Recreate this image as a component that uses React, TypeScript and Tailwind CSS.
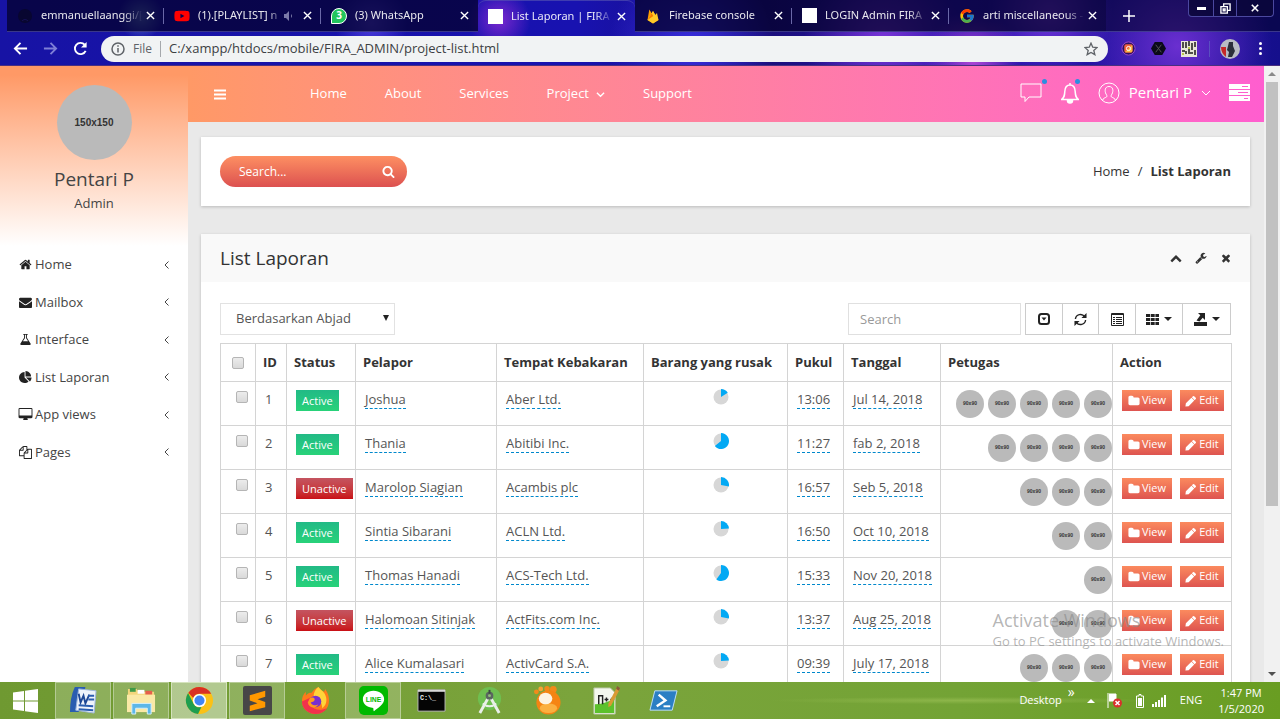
import React, { useState } from "react";
import { FaYoutube } from "react-icons/fa";
import { FcGoogle } from "react-icons/fc";

const PATHS = {
  home: "M1472 992v480q0 26-19 45t-45 19h-384v-384h-256v384h-384q-26 0-45-19t-19-45v-480q0-1 .5-3t.5-3l575-474 575 474q1 2 1 6zm223-69l-62 74q-8 9-21 11h-3q-13 0-21-7l-692-577-692 577q-12 8-24 7-13-2-21-11l-62-74q-8-10-7-23.5t11-21.5l719-599q32-26 76-26t76 26l244 204v-195q0-14 9-23t23-9h192q14 0 23 9t9 23v408l219 182q10 8 11 21.5t-7 23.5z",
  envelope: "M1792 710v794q0 66-47 113t-113 47h-1472q-66 0-113-47t-47-113v-794q44 49 101 87 362 246 497 345 57 42 92.5 65.5t94.5 48 110 24.5h2q51 0 110-24.5t94.5-48 92.5-65.5q170-123 498-345 57-39 100-87zm0-294q0 79-49 151t-122 123q-376 261-468 325-10 7-42.5 31t-54 38.5-52 32.5-57.5 27-50 9h-2q-23 0-50-9t-57.5-27-52-32.5-54-38.5-42.5-31q-91-64-262-182.5t-205-142.5q-62-42-117-115.5t-55-136.5q0-78 41.5-130t118.5-52h1472q65 0 112.5 47t47.5 113z",
  flask: "M1591 1448q56 89 21.5 152.5t-140.5 63.5h-1152q-106 0-140.5-63.5t21.5-152.5l503-793v-399h-64q-26 0-45-19t-19-45 19-45 45-19h512q26 0 45 19t19 45-19 45-45 19h-64v399zm-779-725l-272 429h712l-272-429-20-31v-436h-128v436z",
  pie: "M768 890l546 546q-106 108-247.5 168t-298.5 60q-209 0-385.5-103t-279.5-279.5-103-385.5 103-385.5 279.5-279.5 385.5-103v762zm187 6h773q0 157-60 298.5t-168 247.5zm709-128h-768v-768q209 0 385.5 103t279.5 279.5 103 385.5z",
  desktop: "M1728 992v-832q0-13-9.5-22.5t-22.5-9.5h-1600q-13 0-22.5 9.5t-9.5 22.5v832q0 13 9.5 22.5t22.5 9.5h1600q13 0 22.5-9.5t9.5-22.5zm128-832v1088q0 66-47 113t-113 47h-544q0 37 16 77.5t32 71 16 43.5q0 26-19 45t-45 19h-512q-26 0-45-19t-19-45q0-14 16-44t32-70 16-78h-544q-66 0-113-47t-47-113v-1088q0-66 47-113t113-47h1600q66 0 113 47t47 113z",
  files: "M1696 384q40 0 68 28t28 68v1216q0 40-28 68t-68 28h-960q-40 0-68-28t-28-68v-288h-544q-40 0-68-28t-28-68v-672q0-40 20-88t48-76l408-408q28-28 76-48t88-20h416q40 0 68 28t28 68v328q68-40 128-40h416zm-544 213l-299 299h299v-299zm-640-384l-299 299h299v-299zm196 647l316-316v-416h-384v416q0 40-28 68t-68 28h-416v640h512v-256q0-40 20-88t48-76zm956 804v-1152h-384v416q0 40-28 68t-68 28h-416v640h896z",
  search: "M1216 832q0-185-131.5-316.5t-316.5-131.5-316.5 131.5-131.5 316.5 131.5 316.5 316.5 131.5 316.5-131.5 131.5-316.5zm512 832q0 52-38 90t-90 38q-54 0-90-38l-343-342q-179 124-399 124-143 0-273.5-55.5t-225-150-150-225-55.5-273.5 55.5-273.5 150-225 225-150 273.5-55.5 273.5 55.5 225 150 150 225 55.5 273.5q0 220-124 399l343 343q37 37 37 90z",
  wrench: "M448 1472q0-26-19-45t-45-19-45 19-19 45 19 45 45 19 45-19 19-45zm644-420l-682 682q-37 37-90 37-52 0-91-37l-106-108q-38-36-38-90 0-53 38-91l681-681q39 98 114.5 173.5t173.5 114.5zm634-435q0 39-23 106-47 134-164.5 217.5t-258.5 83.5q-185 0-316.5-131.5t-131.5-316.5 131.5-316.5 316.5-131.5q58 0 121.5 16.5t107.5 46.5q16 11 16 28t-16 28l-293 169v224l193 107q5-3 79-48.5t135.5-81 70.5-35.5q15 0 23.5 10t8.5 25z",
  times: "M1490 1322q0 40-28 68l-136 136q-28 28-68 28t-68-28l-294-294-294 294q-28 28-68 28t-68-28l-136-136q-28-28-28-68t28-68l294-294-294-294q-28-28-28-68t28-68l136-136q28-28 68-28t68 28l294 294 294-294q28-28 68-28t68 28l136 136q28 28 28 68t-28 68l-294 294 294 294q28 28 28 68z",
  up: "M1683 1331l-166 165q-19 19-45 19t-45-19l-531-531-531 531q-19 19-45 19t-45-19l-166-165q-19-19-19-45.5t19-45.5l742-741q19-19 45-19t45 19l742 741q19 19 19 45.5t-19 45.5z",
  folder: "M1728 608v704q0 92-66 158t-158 66h-1216q-92 0-158-66t-66-158v-960q0-92 66-158t158-66h320q92 0 158 66t66 158v32h672q92 0 158 66t66 158z",
  pencil: "M960 416l416 416-832 832-480 64 64-480zM1643 512q0 53-37 90l-166 166-416-416 166-165q36-38 90-38 53 0 91 38l235 234q37 39 37 91z",
};

type IconName = keyof typeof PATHS;

function Icon({ name, className }: { name: IconName; className: string }) {
  return (
    <svg viewBox="0 0 1792 1792" className={`shrink-0 overflow-visible fill-current ${className}`} aria-hidden="true">
      <path d={PATHS[name]} />
    </svg>
  );
}

function Chevron({ dir, className }: { dir: "left" | "down"; className: string }) {
  return (
    <svg viewBox="0 0 10 10" className={`shrink-0 fill-none stroke-current ${className}`} aria-hidden="true">
      <path d={dir === "left" ? "M6.5 1.5 3 5l3.5 3.5" : "M1 3l4 4 4-4"} />
    </svg>
  );
}

function CloseX() {
  return (
    <svg viewBox="0 0 10 10" className="h-[9px] w-[9px] stroke-white stroke-[1.5]" aria-hidden="true">
      <path d="M1 1l8 8M9 1l-8 8" />
    </svg>
  );
}

/* ---------- Browser window ---------- */

const blank = <span className="block h-[15px] w-[15px] bg-white" />;

const tabs: { title: string; icon: React.ReactNode; audio?: boolean; active?: boolean; sep?: boolean }[] = [
  {
    title: "emmanuellaanggi/[",
    sep: true,
    icon: (
      <svg viewBox="0 0 16 16" className="h-4 w-4">
        <circle cx="8" cy="8" r="7" fill="#080630" />
        <path d="M5 13c2-2 4-2 6 0" stroke="#17115a" fill="none" />
      </svg>
    ),
  },
  { title: "(1).[PLAYLIST] n", audio: true, sep: true, icon: <FaYoutube className="h-4 w-4 text-[#f00]" /> },
  {
    title: "(3) WhatsApp",
    icon: (
      <span className="flex h-4 w-4 items-center justify-center rounded-full rounded-bl-xs border border-white bg-[#22c55e] text-[10px] font-bold text-white">
        3
      </span>
    ),
  },
  { title: "List Laporan | FIRA A", active: true, icon: blank },
  {
    title: "Firebase console",
    sep: true,
    icon: (
      <svg viewBox="0 0 16 16" className="h-4 w-4">
        <path d="M2.5 12 4.3 1.5l2.4 3.8L8 3l5.5 9L8 15.5z" fill="#ffa000" />
        <path d="M8 3l2.2 4 1.8-2 1.5 7L8 15.5 2.500 12z" fill="#ffca28" />
        <path d="M2.500 12 6.700 5.300 8.300 8z" fill="#f57c00" />
      </svg>
    ),
  },
  { title: "LOGIN Admin FIRA", sep: true, icon: blank },
  { title: "arti miscellaneous -", icon: <FcGoogle className="h-4 w-4" /> },
];

function Browser() {
  return (
    <header className="shrink-0 bg-[#120d92] bg-[radial-gradient(circle_at_69%_60%,#7a35d8_0,transparent_9%),radial-gradient(circle_at_76%_90%,#b047d6_0,transparent_5%),radial-gradient(circle_at_82%_20%,#7a3ae0_0,transparent_6%),radial-gradient(circle_at_92%_70%,#6a2fd0_0,transparent_8%),radial-gradient(circle_at_39%_30%,#7a28cf_0,transparent_4%),radial-gradient(circle_at_11%_25%,#5a78c8_0,transparent_2%),radial-gradient(circle_at_29%_35%,#5040e0_0,transparent_4%),radial-gradient(circle_at_54%_70%,#3a2fe0_0,transparent_12%),linear-gradient(90deg,#1713a4,#1812b0_45%,#1b0f7c_60%,#2a14b0_75%,#150f8c)] font-['Open_Sans',sans-serif] text-xs text-white">
      <div className="flex h-8 pl-[7px]">
        {tabs.map((t) => (
          <div
            key={t.title}
            className={`flex h-8 min-w-0 max-w-[157px] flex-1 items-center pl-[10px] ${t.active ? "rounded-t-lg border-t border-[#5a58b0]/60" : "border-b border-[#5a58b0]/60 bg-[#04022c]/75"}`}
          >
            <span className="shrink-0">{t.icon}</span>
            <span className="ml-2 min-w-0 flex-1 overflow-hidden font-['Noto_Sans',sans-serif] text-[11px] whitespace-nowrap text-white/90 [mask-image:linear-gradient(90deg,#000_82%,transparent)]">
              {t.title}
            </span>
            {t.audio && (
              <svg viewBox="0 0 12 12" className="mr-1 h-3 w-3 shrink-0 fill-[#7b7aa8]" aria-label="Playing audio">
                <path d="M1 4h2l3-3v10L3 8H1zM8 4q2 2 0 4z" />
              </svg>
            )}
            <button className="mr-2 ml-1 shrink-0" aria-label={`Close ${t.title}`}>
              <CloseX />
            </button>
            <span className={`h-4 w-px shrink-0 ${t.sep ? "bg-[#6a68a8]" : "bg-transparent"}`} />
          </div>
        ))}
        <div className="flex flex-1 items-start border-b border-[#5a58b0]/60 bg-[#04022c]/60">
          <button className="ml-[17px] flex h-8 items-center" aria-label="New tab">
            <svg viewBox="0 0 12 12" className="h-3 w-3 stroke-white stroke-[1.5]">
              <path d="M6 0v12M0 6h12" />
            </svg>
          </button>
          <div className="mr-[6px] ml-auto flex h-[17px] rounded-b border border-t-0 border-[#4b48a0] bg-[#0a0638]/80">
            <button className="flex w-6 items-center justify-center" aria-label="Minimize">
              <span className="h-[3px] w-[9px] bg-white" />
            </button>
            <button className="flex w-6 items-center justify-center border-x border-[#4b48a0]" aria-label="Restore">
              <svg viewBox="0 0 12 12" className="h-[11px] w-[11px] fill-none stroke-white stroke-[1.5]">
                <path d="M1 4h7v7H1zM4 4V1h7v7H8M3.500 6.500h2v2h-2z" />
              </svg>
            </button>
            <button className="flex w-9 items-center justify-center" aria-label="Close window">
              <svg viewBox="0 0 10 10" className="h-2 w-2 stroke-white stroke-2">
                <path d="M1 1l8 8M9 1l-8 8" />
              </svg>
            </button>
          </div>
        </div>
      </div>

      <div className="flex h-[34px] items-center border-b border-[#4a2f80] pr-[18px] pl-[13px]">
        <button aria-label="Back">
          <svg viewBox="0 0 16 16" className="h-[15px] w-[15px] fill-none stroke-white stroke-2">
            <path d="M15 8H2M8 2 2 8l6 6" />
          </svg>
        </button>
        <button className="ml-[15px]" aria-label="Forward">
          <svg viewBox="0 0 16 16" className="h-[15px] w-[15px] fill-none stroke-[#7f7fd6] stroke-2">
            <path d="M1 8h13M8 2l6 6-6 6" />
          </svg>
        </button>
        <button className="ml-[15px]" aria-label="Reload">
          <svg viewBox="0 0 16 16" className="h-[15px] w-[15px] fill-none stroke-white stroke-2">
            <path d="M13.500 10.500A6 6 0 1 1 12.500 4" />
            <path d="M14.500 1v6h-6z" className="fill-white stroke-none" />
          </svg>
        </button>
        <div className="ml-[13px] flex h-[26px] min-w-0 flex-1 items-center rounded-full bg-[#f1f3f4] pr-[10px] pl-[10px] text-[#5f6368]">
          <svg viewBox="0 0 14 14" className="h-[14px] w-[14px] shrink-0 fill-none stroke-[#5f6368] stroke-[1.5]" aria-hidden="true">
            <circle cx="7" cy="7" r="6" />
            <path d="M7 6v4.500M7 3.300v1.500" />
          </svg>
          <span className="ml-2">File</span>
          <span className="mx-2 h-4 w-px bg-[#a5a8ac]" />
          <input
            aria-label="Address"
            className="min-w-0 flex-1 bg-transparent text-[13px] text-[#3c4043] outline-none"
            defaultValue="C:/xampp/htdocs/mobile/FIRA_ADMIN/project-list.html"
          />
          <button aria-label="Bookmark this page">
            <svg viewBox="0 0 16 16" className="h-[14px] w-[14px] fill-none stroke-[#5f6368] stroke-[1.5]">
              <path d="M8 1.300l2 4.600 5 .4-3.800 3.300 1.200 4.900L8 11.900l-4.400 2.600 1.200-4.900L1 6.300l5-.4z" />
            </svg>
          </button>
        </div>
        <div className="flex shrink-0 items-center">
          <svg viewBox="0 0 16 16" className="ml-[13px] h-[15px] w-[15px]" aria-hidden="true">
            <circle cx="8" cy="8" r="7" fill="#2a1260" stroke="#a04ad0" />
            <rect x="3.500" y="3.500" width="9" height="9" rx="2" fill="#f0603c" />
            <path d="M4 12l8-8v6q0 2-2 2z" fill="#f5b843" />
            <circle cx="8" cy="8" r="2.200" fill="none" stroke="#fff" />
          </svg>
          <svg viewBox="0 0 16 16" className="ml-[15px] h-[15px] w-[15px]" aria-hidden="true">
            <path d="M4 1h8l4 7-4 7H4L0 8z" fill="#0a0a18" />
            <path d="M5 4l6 8M11 4l-6 8" stroke="#555" />
          </svg>
          <svg viewBox="0 0 16 16" className="ml-[15px] h-4 w-4" aria-hidden="true">
            <path d="M0 0h16v16H0z" fill="#e8e6d8" />
            <path d="M2 1v6M5 3v4M5 10v3M8 0v5M8 8v5M11 2v7M14 1v5M14 9v5M1 10h3M9 12h3M4 2h2" stroke="#1b1b1b" strokeWidth="1.500" />
            <path d="M7 6h2v2H7zM1 12h2v2H1z" fill="#b9c94a" />
          </svg>
          <span className="ml-3 h-4 w-px bg-[#5a50c0]" />
          <svg viewBox="0 0 20 20" className="ml-[10px] h-5 w-5" aria-hidden="true">
            <circle cx="10" cy="10" r="10" fill="#b9bcc4" />
            <path d="M1 8h5v10Q1 14 1 8z" fill="#c62828" />
            <path d="M9 3h4v4l2 5-3 6H8l1-5-2-2z" fill="#2b2f3a" />
          </svg>
          <button className="ml-[19px] grid gap-[2px]" aria-label="Menu">
            <span className="h-[3px] w-[3px] rounded-full bg-white" />
            <span className="h-[3px] w-[3px] rounded-full bg-white" />
            <span className="h-[3px] w-[3px] rounded-full bg-white" />
          </button>
        </div>
      </div>
    </header>
  );
}

/* ---------- Sidebar ---------- */

const menu: { label: string; icon: IconName }[] = [
  { label: "Home", icon: "home" },
  { label: "Mailbox", icon: "envelope" },
  { label: "Interface", icon: "flask" },
  { label: "List Laporan", icon: "pie" },
  { label: "App views", icon: "desktop" },
  { label: "Pages", icon: "files" },
];

function Sidebar() {
  return (
    <aside className="w-[188px] shrink-0 bg-white text-[#444]">
      <div className="flex h-[180px] flex-col items-center bg-linear-to-b from-[#ff9966] from-5% to-white pt-[19px]">
        <div className="flex h-[75px] w-[75px] items-center justify-center rounded-full bg-[#bababa] font-['Liberation_Sans',sans-serif] text-[10px] font-bold text-[#333]">
          150x150
        </div>
        <div className="mt-[7px] text-[19px] leading-6">Pentari P</div>
        <div className="mt-[2px] text-[13px] leading-5">Admin</div>
      </div>
      <nav className="grid h-[225px] grid-rows-6">
        {menu.map((m) => (
          <a key={m.label} href="#" className="flex items-center pr-4 pl-[19px] text-[13px]">
            <Icon name={m.icon} className="h-[13px] w-[13px] text-[#222]" />
            <span className="ml-[3px]">{m.label}</span>
            <Chevron dir="left" className="ml-auto h-[10px] w-[10px]" />
          </a>
        ))}
      </nav>
    </aside>
  );
}

/* ---------- Top bar ---------- */

function Topbar() {
  return (
    <div className="flex h-14 shrink-0 items-center bg-linear-to-r from-[#ff9966] to-[#ff5ecf] pr-[14px] pl-[26px] text-[13px] font-medium text-white">
      <button aria-label="Toggle sidebar">
        <svg viewBox="0 0 12 11" className="h-[11px] w-3 fill-white">
          <path d="M0 .5h12v2H0zM0 4.500h12v2H0zM0 8.500h12v2H0z" />
        </svg>
      </button>
      <nav className="ml-[84px] flex gap-[38px]">
        <a href="#">Home</a>
        <a href="#">About</a>
        <a href="#">Services</a>
        <a href="#" className="flex items-center gap-[7px]">
          Project <Chevron dir="down" className="h-[9px] w-[9px] stroke-[1.5]" />
        </a>
        <a href="#">Support</a>
      </nav>
      <div className="ml-auto flex items-center pb-[3px]">
        <button className="relative" aria-label="Messages">
          <svg viewBox="0 0 22 20" className="h-5 w-[22px] fill-none stroke-white">
            <path d="M1 1h20v13H9l-4 4.500V14H1z" />
          </svg>
          <span className="absolute -top-1 -right-[5px] h-[5px] w-[5px] rounded-full bg-[#2b8fe0]" />
        </button>
        <button className="relative ml-[18px]" aria-label="Notifications">
          <svg viewBox="0 0 20 22" className="h-[22px] w-5 fill-none stroke-white stroke-[1.5]">
            <path d="M1 17.500h18M1.500 17.500c3-2 3-4 3.300-8C5 5 7 3 10 3s5 2 5.200 6.500c.3 4 .3 6 3.300 8M10 3V1" />
            <path d="M7.500 18.500a2.500 2.500 0 0 0 5 0z" className="fill-white" />
          </svg>
          <span className="absolute -top-[3px] right-0 h-[5px] w-[5px] rounded-full bg-[#2b8fe0]" />
        </button>
        <button className="ml-[18px] flex items-center">
          <svg viewBox="0 0 22 22" className="h-[22px] w-[22px] fill-none stroke-white">
            <circle cx="11" cy="11" r="10" />
            <path d="M4.500 18.500c.5-2.500 2.500-2.500 4-3.500.8-.8.300-1.800-.5-3-1.500-3-1.300-7.500 3-7.500s4.500 4.500 3 7.500c-.8 1.200-1.300 2.200-.5 3 1.500 1 3.500 1 4 3.500" />
          </svg>
          <span className="ml-[9px] text-[15px]">Pentari P</span>
          <Chevron dir="down" className="ml-[9px] h-[10px] w-[10px]" />
        </button>
        <button className="ml-[18px]" aria-label="Settings">
          <svg viewBox="0 0 21 17" className="h-[17px] w-[21px] fill-white">
            <path d="M0 0h21v5H0zm13 2v1h6V2zM0 6h21v5H0zm9 2v1h10V8zM0 12h21v5H0zm15 2v1h4v-1z" fillRule="evenodd" />
          </svg>
        </button>
      </div>
    </div>
  );
}

/* ---------- Report table ---------- */

const rows = [
  { id: 1, active: true, name: "Joshua", place: "Aber Ltd.", pie: 16, time: "13:06", date: "Jul 14, 2018", staff: 5 },
  { id: 2, active: true, name: "Thania", place: "Abitibi Inc.", pie: 64, time: "11:27", date: "fab 2, 2018", staff: 4 },
  { id: 3, active: false, name: "Marolop Siagian", place: "Acambis plc", pie: 28, time: "16:57", date: "Seb 5, 2018", staff: 3 },
  { id: 4, active: true, name: "Sintia Sibarani", place: "ACLN Ltd.", pie: 24, time: "16:50", date: "Oct 10, 2018", staff: 2 },
  { id: 5, active: true, name: "Thomas Hanadi", place: "ACS-Tech Ltd.", pie: 60, time: "15:33", date: "Nov 20, 2018", staff: 1 },
  { id: 6, active: false, name: "Halomoan Sitinjak", place: "ActFits.com Inc.", pie: 28, time: "13:37", date: "Aug 25, 2018", staff: 2 },
  { id: 7, active: true, name: "Alice Kumalasari", place: "ActivCard S.A.", pie: 24, time: "09:39", date: "July 17, 2018", staff: 3 },
];

function Pie({ value }: { value: number }) {
  const a = (value / 100) * 2 * Math.PI;
  const x = 8 + 8 * Math.sin(a);
  const y = 8 - 8 * Math.cos(a);
  return (
    <svg viewBox="0 0 16 16" className="mx-auto h-4 w-4" role="img" aria-label={`${value}%`}>
      <circle cx="8" cy="8" r="7.500" fill="#d7d7d7" />
      <path d={`M8 8V0A8 8 0 ${value > 50 ? 1 : 0} 1 ${x} ${y}z`} fill="#03a9f4" />
    </svg>
  );
}

function Check({ label }: { label: string }) {
  return (
    <input
      type="checkbox"
      aria-label={label}
      className="block h-3 w-3 appearance-none rounded-[2px] border border-[#b5b5b5] bg-linear-to-b from-[#ececec] to-[#d9d9d9] checked:bg-[#03a9f4]"
    />
  );
}

function Editable({ children }: { children: React.ReactNode }) {
  return (
    <a href="#" className="inline-block border-b border-dashed border-b-[#0088cc] leading-[17px] whitespace-nowrap">
      {children}
    </a>
  );
}

const heads = ["ID", "Status", "Pelapor", "Tempat Kebakaran", "Barang yang rusak", "Pukul", "Tanggal", "Petugas", "Action"];
const cell = "border border-[#d4d4d4] pl-[9px] pt-[8px] align-top";
const action =
  "flex h-[21px] items-center justify-center gap-[2px] bg-linear-to-b from-[#fb8a5e] to-[#de5450] text-[11px] font-medium text-white";
const tool = "flex h-8 items-center justify-center gap-[5px] border border-l-0 border-[#ccc] text-[#222] first:border-l";

function Caret() {
  return (
    <svg viewBox="0 0 8 4" className="h-1 w-2 fill-current" aria-hidden="true">
      <path d="M0 0h8L4 4z" />
    </svg>
  );
}

function Report() {
  const [sort, setSort] = useState("Berdasarkan Abjad");
  return (
    <section className="mt-7 bg-white shadow-[0_1px_3px_#0003]">
      <div className="flex h-12 items-center bg-[#f9f9f9] pr-[18px] pl-[19px] text-[#333]">
        <h1 className="text-[19px]">List Laporan</h1>
        <div className="ml-auto flex items-center gap-[13px]">
          <button aria-label="Collapse"><Icon name="up" className="h-3 w-3" /></button>
          <button aria-label="Options"><Icon name="wrench" className="h-3 w-3" /></button>
          <button aria-label="Close"><Icon name="times" className="h-3 w-3" /></button>
        </div>
      </div>
      <div className="px-[19px] pt-[21px]">
        <div className="flex items-center">
          <div className="relative">
            <select
              aria-label="Sort"
              value={sort}
              onChange={(e) => setSort(e.target.value)}
              className="h-8 w-[175px] appearance-none border border-[#e2e2e2] bg-white pl-[15px] text-[13px] text-[#555]"
            >
              <option>Berdasarkan Abjad</option>
              <option>Berdasarkan Tanggal</option>
            </select>
            <svg viewBox="0 0 6 6" className="pointer-events-none absolute top-3 right-[6px] h-[6px] w-[6px] fill-[#222]" aria-hidden="true">
              <path d="M0 0h6L3 6z" />
            </svg>
          </div>
          <input
            type="search"
            aria-label="Search table"
            placeholder="Search"
            className="ml-auto h-8 w-[173px] border border-[#e0e0e0] px-[11px] text-[13px] placeholder:text-[#999]"
          />
          <div className="ml-1 flex">
            <button className={`${tool} w-[38px]`} aria-label="Toggle pagination">
              <svg viewBox="0 0 12 12" className="h-3 w-3">
                <rect x="1" y="1" width="10" height="10" rx="2.500" fill="none" stroke="currentColor" strokeWidth="2" />
                <path d="M3.500 4.500h5L6 7.500z" fill="currentColor" />
              </svg>
            </button>
            <button className={`${tool} w-9`} aria-label="Refresh">
              <svg viewBox="0 0 14 14" className="h-[13px] w-[13px] fill-none stroke-current stroke-[1.5]">
                <path d="M1.500 6.500A5.500 5.500 0 0 1 11.500 4M12.500 7.500A5.500 5.500 0 0 1 2.500 10" />
                <path d="M13.500 0v5.500H8zM.5 14V8.500H6z" className="fill-current stroke-none" />
              </svg>
            </button>
            <button className={`${tool} w-[37px]`} aria-label="Toggle view">
              <svg viewBox="0 0 13 13" className="h-[13px] w-[13px] fill-none stroke-current">
                <path d="M.5.5h12v12H.5zM.5 1.500h12" />
                <path d="M5 4.500h6M5 6.500h6M5 8.500h6M5 10.500h6" />
                <path d="M2 4.500h2M2 6.500h2M2 8.500h2M2 10.500h2" />
              </svg>
            </button>
            <button className={`${tool} w-[47px]`} aria-label="Columns">
              <svg viewBox="0 0 13 13" className="h-[13px] w-[13px] fill-current">
                <path d="M0 1h4v3H0zM4.700 1h4v3h-4zM9.400 1h3.600v3H9.400zM0 5h4v3H0zM4.700 5h4v3h-4zM9.400 5h3.600v3H9.400zM0 9h4v3H0zM4.700 9h4v3h-4zM9.400 9h3.600v3H9.400z" />
              </svg>
              <Caret />
            </button>
            <button className={`${tool} w-12`} aria-label="Export">
              <svg viewBox="0 0 13 13" className="h-[13px] w-[13px] fill-current">
                <path d="M0 9h13v4H0zM4 0h7v7L8.700 4.700 5.500 8.500 2.500 7.500 6.300 2.300z" />
              </svg>
              <Caret />
            </button>
          </div>
        </div>

        <table className="mt-2 w-full table-fixed border-collapse text-[13px] text-[#555]">
          <colgroup>
            <col className="w-[35px]" />
            <col className="w-[31px]" />
            <col className="w-[69px]" />
            <col className="w-[141px]" />
            <col className="w-[147px]" />
            <col className="w-[144px]" />
            <col className="w-[56px]" />
            <col className="w-[97px]" />
            <col className="w-[172px]" />
            <col className="w-[119px]" />
          </colgroup>
          <thead>
            <tr className="h-[38px]">
              <th className="border border-[#d4d4d4] pl-[11px]"><Check label="Select all" /></th>
              {heads.map((h) => (
                <th key={h} className="border border-[#d4d4d4] pl-[7px] text-left font-bold whitespace-nowrap text-[#333]">
                  {h}
                </th>
              ))}
            </tr>
          </thead>
          <tbody>
            {rows.map((r) => (
              <tr key={r.id} className="h-11">
                <td className="border border-[#d4d4d4] pt-[9px] pl-[15px] align-top"><Check label={`Select ${r.name}`} /></td>
                <td className={cell}>{r.id}</td>
                <td className={cell}>
                  <span
                    className={`block h-[21px] w-fit px-[6px] text-[11px] leading-[21px] font-medium text-white ${r.active ? "bg-linear-to-b from-[#22ba86] to-[#28d279]" : "bg-linear-to-b from-[#c45460] to-[#c90d14]"}`}
                  >
                    {r.active ? "Active" : "Unactive"}
                  </span>
                </td>
                <td className={cell}><Editable>{r.name}</Editable></td>
                <td className={cell}><Editable>{r.place}</Editable></td>
                <td className="border border-[#d4d4d4] pt-[7px] pl-[11px] align-top"><Pie value={r.pie} /></td>
                <td className={cell}><Editable>{r.time}</Editable></td>
                <td className={cell}><Editable>{r.date}</Editable></td>
                <td className="border border-[#d4d4d4] pt-[8px] align-top">
                  <div className="flex justify-end gap-[4px]">
                    {Array.from({ length: r.staff }, (_, i) => (
                      <span
                        key={i}
                        className="flex h-7 w-7 items-center justify-center rounded-full bg-[#bababa] font-['Liberation_Sans',sans-serif] text-[5px] font-bold text-[#333]"
                      >
                        90x90
                      </span>
                    ))}
                  </div>
                </td>
                <td className={cell}>
                  <div className="flex gap-2">
                    <button className={`${action} w-[50px]`}><Icon name="folder" className="h-3 w-3" />View</button>
                    <button className={`${action} w-11`}><Icon name="pencil" className="h-3 w-3" />Edit</button>
                  </div>
                </td>
              </tr>
            ))}
          </tbody>
        </table>
      </div>
    </section>
  );
}

/* ---------- Taskbar ---------- */

const apps: { name: string; open?: boolean; front?: boolean; icon: React.ReactNode }[] = [
  {
    name: "Word",
    open: true,
    icon: (
      <>
        <path d="M6 1h11L10 27H1Q1 12 6 1z" fill="#2a5db0" />
        <path d="M10 3l18 2-2 23-19-3z" fill="#eef3fb" stroke="#9db6dc" />
        <path d="M10 8l2 9 3-7 2 8 4-9" fill="none" stroke="#1d4795" strokeWidth="2" />
        <path d="M20 10h6M20 14h6M10 20l15 1M10 24l15 1" stroke="#2a5db0" strokeWidth="2" />
      </>
    ),
  },
  {
    name: "File Explorer",
    open: true,
    icon: (
      <>
        <path d="M1 3h9l2 3h16v21H1z" fill="#f3d67c" />
        <path d="M3 2h6v4H3z" fill="#3f9b46" />
        <path d="M11 4h7v4h-7z" fill="#fff" />
        <path d="M19 5h7v4h-7z" fill="#e5604c" />
        <path d="M0 9h29v18H0z" fill="#fae9a6" />
        <path d="M5 18h20v11h-4v-6H9v6H5z" fill="#5db7e8" stroke="#d7f1fc" />
      </>
    ),
  },
  {
    name: "Chrome",
    open: true,
    front: true,
    icon: (
      <>
        <circle cx="15" cy="15" r="14" fill="#fbc116" />
        <path d="M15 1a14 14 0 0 1 12.100 7H15a7 7 0 0 0-6.500 4.500L3.500 7A14 14 0 0 1 15 1z" fill="#d93025" />
        <path d="M3.200 7.300 9 18.500a7 7 0 0 0 8 3.200L13.500 29A14 14 0 0 1 3.200 7.300z" fill="#1e9e4f" />
        <circle cx="15" cy="15" r="6.800" fill="#fff" />
        <circle cx="15" cy="15" r="5.200" fill="#4285f4" />
      </>
    ),
  },
  {
    name: "Sublime Text",
    open: true,
    icon: (
      <>
        <rect width="30" height="30" rx="2" fill="#474747" />
        <path d="M7 9.500 23 5v6l-8 2.700 8 2.800V22L7 26v-5.500l8-2.700-8-2.800z" fill="#ff9800" />
      </>
    ),
  },
  {
    name: "Firefox",
    icon: (
      <>
        <path d="M15 29C7 29 1 23 1 16c0-4 1-7 4-10v4c2-3 5-3 6-3 2-3 4-5 7-6 2 3 4 4 6 5l1-3c3 4 4 8 4 12 0 8-6 14-14 14z" fill="#ff7a1a" />
        <path d="M18 1c3 4 7 5 8 11 1 5-1 9-4 11 0-7-5-11-9-12 0-4 2-8 5-10z" fill="#ffd43a" />
        <path d="M1 16c0 7 6 13 14 13 5 0 9-2 12-6-5 2-13 3-17-3-2-3-1-6 0-8z" fill="#f2334c" />
        <circle cx="15" cy="16" r="6" fill="#7a2fd0" />
        <path d="M9 13c4-3 7 1 4 3l-3 1c1 3 6 4 8 2-2 5-10 4-11-2z" fill="#ff9a1f" />
      </>
    ),
  },
  {
    name: "LINE",
    open: true,
    icon: (
      <>
        <rect width="30" height="30" rx="5" fill="#00b900" />
        <path d="M15 5c6.500 0 11 4 11 8.800 0 5-6 9-10.500 12.200-.7.200-.5-2.800-.8-3.300C8.500 22.500 4 18.500 4 13.800 4 9 8.500 5 15 5z" fill="#fff" />
        <text x="15" y="17" textAnchor="middle" fontSize="7" fontWeight="700" fill="#00b900" fontFamily="Liberation Sans, sans-serif">LINE</text>
      </>
    ),
  },
  {
    name: "Command Prompt",
    icon: (
      <>
        <path d="M1 4h28v22H1z" fill="#050505" stroke="#b8b8b8" />
        <path d="M1 4h28v2H1z" fill="#d8d8d8" />
        <text x="3" y="14" fontSize="7" fontWeight="700" fill="#eee" fontFamily="Liberation Mono, monospace">C:\_</text>
      </>
    ),
  },
  {
    name: "Android Studio",
    icon: (
      <>
        <circle cx="15" cy="13" r="12" fill="#6fbf50" />
        <path d="M15 10 5 28M15 10l10 18" stroke="#e9efe9" strokeWidth="3" />
        <path d="M8 18q7 6 14 0" stroke="#e9efe9" strokeWidth="2" fill="none" />
        <circle cx="15" cy="10" r="4" fill="#5a6660" />
        <circle cx="15" cy="10" r="1.500" fill="#8fbf7a" />
        <path d="M14 4h2v4h-2z" fill="#3b4a42" />
      </>
    ),
  },
  {
    name: "GOM Player",
    icon: (
      <>
        <circle cx="3.500" cy="6" r="2.500" fill="#f28a1a" />
        <circle cx="8" cy="3" r="2.500" fill="#f7a233" />
        <circle cx="14.500" cy="2.800" r="2.800" fill="#f28a1a" />
        <circle cx="21" cy="3.500" r="3.500" fill="#f28a1a" />
        <circle cx="16" cy="17" r="12.500" fill="#f58413" />
        <ellipse cx="16" cy="23" rx="9" ry="5" fill="#fbb040" />
        <ellipse cx="13" cy="13" rx="7" ry="6" fill="#fdf3e2" />
      </>
    ),
  },
  {
    name: "Notepad++",
    icon: (
      <>
        <path d="M3 2h17l5 5v22H3z" fill="#f4f7ee" stroke="#b5c3a0" />
        <path d="M4 19q10 0 20-6v15H4z" fill="#5cc12c" />
        <path d="M8 19v-9h4v9M14 14h4M16 12v4M20 14h4M22 12v4" stroke="#222" strokeWidth="1.500" fill="none" />
        <path d="M27 1l3 2-9 17-3 2v-4z" fill="#d99a33" />
        <path d="M27 0l3 2-1 3-3-2z" fill="#8a5a3a" />
      </>
    ),
  },
  {
    name: "PowerShell",
    icon: (
      <>
        <path d="M6 5h23l-5 20H1z" fill="#2b7fc4" stroke="#bfe0f7" />
        <path d="M10 9l7 6-9 6" fill="none" stroke="#fff" strokeWidth="2.500" />
        <path d="M15 21h7" stroke="#fff" strokeWidth="2" />
      </>
    ),
  },
];

function Taskbar() {
  return (
    <footer className="flex h-[37px] shrink-0 items-center bg-[#76a136] bg-[radial-gradient(ellipse_at_75%_50%,#8db64a,transparent_14%),linear-gradient(90deg,#6f9931,#7ba43c_45%,#73a335_75%,#699d22)] font-['Open_Sans',sans-serif] text-[11px] text-white">
      <button className="flex w-[55px] shrink-0 justify-center" aria-label="Start">
        <svg viewBox="0 0 25 24" className="mr-1 h-6 w-[25px] fill-white">
          <path d="M0 3.500 11 2v9.500H0zM12 1.800 25 0v11.500H12zM0 12.500h11V22L0 20.500zM12 12.500h13V24l-13-1.800z" />
        </svg>
      </button>
      <div className="flex gap-[2px]">
        {apps.map((a) => (
          <button
            key={a.name}
            aria-label={a.name}
            className={`flex h-[37px] w-14 items-center justify-center border ${a.front ? "border-[#d5e3bd] bg-white/45" : a.open ? "border-white/35 bg-white/20" : "border-transparent"}`}
          >
            <svg viewBox="0 0 30 30" className="h-[29px] w-[29px]">{a.icon}</svg>
          </button>
        ))}
      </div>
      <div className="mr-4 ml-auto flex items-center">
        <span>Desktop</span>
        <span className="ml-[6px] self-start text-sm leading-none">»</span>
        <svg viewBox="0 0 8 4" className="ml-3 h-1 w-2 fill-white" aria-hidden="true"><path d="M0 4h8L4 0z" /></svg>
        <svg viewBox="0 0 15 15" className="ml-3 h-[15px] w-[15px]" aria-hidden="true">
          <path d="M1 0v15M2 1h7v7H2" stroke="#fff" fill="#fff" />
          <circle cx="10.500" cy="10" r="4.500" fill="#d9302c" />
          <path d="M8.500 8l4 4M12.500 8l-4 4" stroke="#fff" strokeWidth="1.500" />
        </svg>
        <svg viewBox="0 0 8 14" className="ml-[14px] h-[14px] w-2" aria-hidden="true">
          <path d="M3 .5h2V2h2.500v11.500h-7V2H3z" fill="none" stroke="#fff" />
          <path d="M2 4h4v8H2z" fill="#fff" />
        </svg>
        <svg viewBox="0 0 14 12" className="ml-2 h-3 w-[14px] fill-white" aria-hidden="true">
          <path d="M0 9h2v3H0zM3 7h2v5H3zM6 5h2v7H6zM9 2.500h2V12H9zM12 0h2v12h-2z" />
        </svg>
        <span className="ml-[14px]">ENG</span>
        <div className="ml-4 text-center leading-4">
          <div>1:47 PM</div>
          <div>1/5/2020</div>
        </div>
      </div>
    </footer>
  );
}

export default function App() {
  return (
    <div className="flex h-screen flex-col overflow-hidden font-['Open_Sans',sans-serif]">
      <Browser />
      <div className="relative flex min-h-0 flex-1 bg-[#e9e9e9]">
        <Sidebar />
        <main className="flex min-w-0 flex-1 flex-col overflow-hidden">
          <Topbar />
          <div className="min-h-0 flex-1 overflow-hidden pt-[15px] pr-[14px] pl-[13px]">
            <section className="flex h-[69px] items-center bg-white px-[19px] shadow-[0_1px_3px_#0003]">
              <form className="flex h-[31px] w-[187px] items-center rounded-full bg-linear-to-b from-[#fd8f62] to-[#dc5050] pr-3 pl-[19px] text-white" onSubmit={(e) => e.preventDefault()}>
                <input aria-label="Search" placeholder="Search..." className="min-w-0 flex-1 bg-transparent text-xs font-medium outline-none placeholder:text-white" />
                <button aria-label="Submit search"><Icon name="search" className="h-[13px] w-[13px]" /></button>
              </form>
              <nav className="ml-auto flex gap-2 text-[13px] text-[#333]" aria-label="Breadcrumb">
                <a href="#">Home</a>
                <span>/</span>
                <b>List Laporan</b>
              </nav>
            </section>
            <Report />
          </div>
        </main>
        <div className="flex w-4 shrink-0 flex-col items-center bg-[#f1f1f1]" aria-hidden="true">
          <svg viewBox="0 0 8 4" className="my-[6px] h-1 w-2 fill-[#8a8a8a]"><path d="M0 4h8L4 0z" /></svg>
          <div className="w-3 flex-[424] bg-[#c1c1c1]" />
          <div className="flex-[160]" />
          <svg viewBox="0 0 8 4" className="my-[6px] h-1 w-2 fill-[#505050]"><path d="M0 0h8L4 4z" /></svg>
        </div>
        <div className="pointer-events-none absolute right-[56px] bottom-8 text-[#8c8c8c]/65">
          <div className="text-lg leading-6">Activate Windows</div>
          <div className="text-[13px] leading-[18px]">Go to PC settings to activate Windows.</div>
        </div>
      </div>
      <Taskbar />
    </div>
  );
}
